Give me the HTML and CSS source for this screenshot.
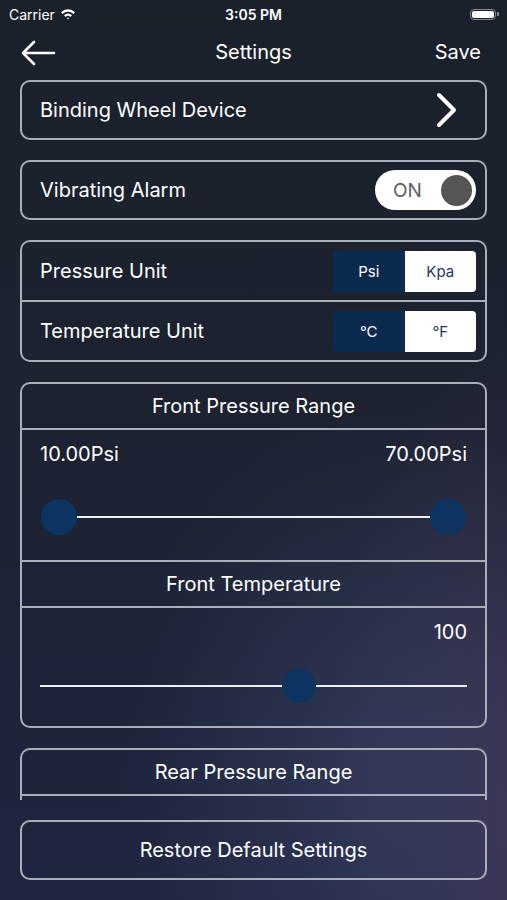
FILE: index.html
```html
<!DOCTYPE html>
<html lang="en">
<head>
    <meta charset="UTF-8">
    <title>Settings</title>
    <link rel="stylesheet" href="styles.css">
</head>
<body>
    <div class="status">
        <div class="carrier">Carrier
            <svg class="wifi" width="16" height="12" viewBox="0 0 16 12">
                <path d="M1 4.2 A10 10 0 0 1 15 4.2 L13.3 5.9 A7.6 7.6 0 0 0 2.7 5.9 Z" fill="#fff"/>
                <path d="M4 7.2 A5.6 5.6 0 0 1 12 7.2 L10.3 8.9 A3.2 3.2 0 0 0 5.7 8.9 Z" fill="#fff"/>
                <path d="M6.9 10 A1.6 1.6 0 0 1 9.1 10 L8 11.4 Z" fill="#fff"/>
            </svg>
        </div>
        <div class="time">3:05 PM</div>
        <div class="battery"><span></span></div>
    </div>

    <div class="nav">
        <svg class="back" width="36" height="26" viewBox="0 0 36 26">
            <path d="M3 13 H34 M14 2 L3 13 L14 24" fill="none" stroke="#fff" stroke-width="2.6" stroke-linecap="round" stroke-linejoin="round"/>
        </svg>
        <div class="title">Settings</div>
        <div class="save">Save</div>
    </div>

    <div class="scroll">
        <div class="card row">
            <span>Binding Wheel Device</span>
            <svg width="22" height="36" viewBox="0 0 22 36">
                <path d="M3 3 L18 18 L3 33" fill="none" stroke="#fff" stroke-width="4" stroke-linecap="round" stroke-linejoin="round"/>
            </svg>
        </div>

        <div class="card row">
            <span>Vibrating Alarm</span>
            <div class="toggle"><span class="toggle-text">ON</span><span class="knob"></span></div>
        </div>

        <div class="card">
            <div class="row">
                <span>Pressure Unit</span>
                <div class="segment"><span class="on">Psi</span><span>Kpa</span></div>
            </div>
            <div class="row divided">
                <span>Temperature Unit</span>
                <div class="segment"><span class="on">°C</span><span>°F</span></div>
            </div>
        </div>

        <div class="card">
            <div class="head">Front Pressure Range</div>
            <div class="range-block">
                <div class="values"><span>10.00Psi</span><span>70.00Psi</span></div>
                <div class="slider range">
                    <div class="track"></div>
                    <span class="thumb" style="left: 0%"></span>
                    <span class="thumb" style="left: 100%"></span>
                </div>
            </div>
            <div class="head divided">Front Temperature</div>
            <div class="range-block temp">
                <div class="values right"><span>100</span></div>
                <div class="slider single">
                    <div class="track"></div>
                    <span class="thumb small" style="left: 60.7%"></span>
                </div>
            </div>
        </div>

        <div class="card clipped">
            <div class="head">Rear Pressure Range</div>
            <div class="range-block"></div>
        </div>
    </div>

    <div class="footer">
        <div class="card restore">Restore Default Settings</div>
    </div>
</body>
</html>
```

FILE: styles.css
```css
body {
    margin: 0;
    height: 900px;
    overflow: hidden;
    font-family: Inter, "Liberation Sans", sans-serif;
    color: #fff;
    background:
        radial-gradient(ellipse 260px 380px at 380px 780px, rgba(62, 72, 108, 0.55), transparent),
        radial-gradient(ellipse 200px 500px at 520px 820px, rgba(80, 60, 95, 0.6), transparent),
        linear-gradient(180deg, #1b212b 0%, #1c2230 45%, #1e2540 100%);
}

.status { height: 28px; display: flex; align-items: center; justify-content: space-between; padding: 0 9px; position: relative; font-size: 14px; }
.carrier { display: flex; align-items: center; gap: 5px; }
.time { position: absolute; left: 0; right: 0; text-align: center; font-weight: 600; font-size: 14px; }
.battery { width: 26px; height: 11px; border: 1.5px solid #888; border-radius: 4px; padding: 1px; box-sizing: border-box; margin-right: 2px; position: relative; }
.battery span { display: block; height: 100%; background: #fff; border-radius: 2px; }
.battery::after { content: ""; position: absolute; right: -4px; top: 2px; width: 2px; height: 4px; background: #888; border-radius: 0 1px 1px 0; }

.nav { height: 48px; display: flex; align-items: center; justify-content: space-between; padding: 0 26px 0 20px; position: relative; font-size: 20px; }
.nav .title { position: absolute; left: 0; right: 0; text-align: center; }
.back { margin-top: 2px; }
.save { position: relative; }

.scroll { height: 724px; overflow: hidden; padding: 4px 20px 0; box-sizing: border-box; display: flex; flex-direction: column; gap: 20px; }

.card { border: 2px solid #a9aeb8; border-radius: 10px; font-size: 20px; flex-shrink: 0; }
.row { height: 58px; display: flex; align-items: center; justify-content: space-between; padding: 0 9px 0 18px; }
.card.row { height: 60px; box-sizing: border-box; }
.card.row svg { margin-right: 18px; }
.divided { border-top: 2px solid #a9aeb8; }

.toggle { width: 101px; height: 40px; background: #fff; border-radius: 20px; display: flex; align-items: center; justify-content: space-between; padding: 0 4px 0 18px; box-sizing: border-box; }
.toggle-text { color: #5e5e5e; font-size: 19px; }
.knob { width: 31px; height: 31px; border-radius: 50%; background: #555; }

.segment { display: flex; width: 143px; height: 41px; border-radius: 4px; overflow: hidden; font-size: 15px; }
.segment span { flex: 1; display: flex; align-items: center; justify-content: center; background: #fff; color: #1e3a63; }
.segment span.on { background: #0b2a50; color: #fff; }

.head { height: 44px; display: flex; align-items: center; justify-content: center; }
.range-block { border-top: 2px solid #a9aeb8; height: 130px; padding: 0 18px; }
.range-block.temp { height: 118px; }
.values { display: flex; justify-content: space-between; padding-top: 12px; height: 24px; }
.values.right { justify-content: flex-end; }

.slider { position: relative; height: 36px; }
.slider.range { margin: 33px 19px 0; }
.slider.single { margin-top: 24px; }
.track { position: absolute; left: 0; right: 0; top: 17px; height: 2px; background: #eceef2; }
.thumb { position: absolute; top: 0; width: 36px; height: 36px; margin-left: -18px; border-radius: 50%; background: #0d3460; }
.thumb.small { width: 34px; height: 34px; margin-left: -17px; top: 1px; }

.card.clipped { border-bottom: none; border-radius: 10px 10px 0 0; }

.footer { padding: 20px 20px 0; }
.restore { height: 60px; box-sizing: border-box; display: flex; align-items: center; justify-content: center; }
```
